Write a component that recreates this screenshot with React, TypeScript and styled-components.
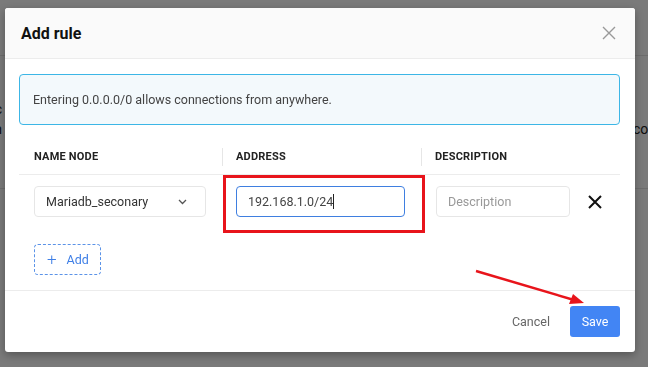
import styled, { createGlobalStyle } from "styled-components";

// page setup
const GlobalStyle = createGlobalStyle`
  html, body {
    margin: 0;
    padding: 0;
    width: 648px;
    height: 367px;
    overflow: hidden;
    font-family: Roboto, "Liberation Sans", Arial, sans-serif;
  }
  * { box-sizing: border-box; }
`;

const columns = ["Name node", "Address", "Description"];

export default function App() {
	return (
		<>
			<GlobalStyle />
			<Page>
				<PageTop />
				<PageRows>
					<PageCol>
						<PageText>sec</PageText>
						<PageText>on</PageText>
					</PageCol>
					<PageCol $right>
						<PageText>con</PageText>
					</PageCol>
				</PageRows>
				<PageLine />
			</Page>
			<Backdrop />

			<Modal>
				<Header>
					<Title>Add rule</Title>
					<CloseBtn aria-label="close">
						<svg width="14" height="14" viewBox="0 0 14 14">
							<path d="M1 1L13 13M13 1L1 13" stroke="#999" strokeWidth="1.4" />
						</svg>
					</CloseBtn>
				</Header>

				<Body>
					<Alert>Entering 0.0.0.0/0 allows connections from anywhere.</Alert>

					<Table>
						<HeadRow>
							{columns.map((col, i) => (
								<HeadCell key={col} $divider={i > 0}>
									{col}
								</HeadCell>
							))}
						</HeadRow>
						<Row>
							<Cell $pad={15}>
								<Select>
									<span>Mariadb_seconary</span>
									<svg width="9" height="6" viewBox="0 0 9 6">
										<path d="M1 1l3.5 3.5L8 1" fill="none" stroke="#555" strokeWidth="1.3" />
									</svg>
								</Select>
							</Cell>
							<Cell $pad={14}>
								<Input $focused>
									192.168.1.0/24<Caret />
								</Input>
							</Cell>
							<Cell $pad={15}>
								<Input $width="134px" $placeholder>
									Description
								</Input>
								<RemoveBtn aria-label="remove">
									<svg width="14" height="14" viewBox="0 0 14 14">
										<path d="M1 1L13 13M13 1L1 13" stroke="#111" strokeWidth="2" />
									</svg>
								</RemoveBtn>
							</Cell>
						</Row>
					</Table>

					<AddBtn>
						<span>+</span>
						Add
					</AddBtn>
				</Body>

				<Footer>
					<CancelBtn>Cancel</CancelBtn>
					<SaveBtn>Save</SaveBtn>
				</Footer>

				{/* screenshot annotations */}
				<Highlight />
				<Arrow width="120" height="40" viewBox="0 0 120 40">
					<path d="M2 2L100 31" stroke="#e8141b" strokeWidth="2.4" />
					<path d="M110 34L95 35L99 25Z" fill="#e8141b" />
				</Arrow>
			</Modal>
		</>
	);
}

const Page = styled.div`
  width: 648px;
  height: 367px;
  background: #fff;
  display: flex;
  flex-direction: column;
`;

const PageTop = styled.div`
  height: 56px;
  border-bottom: 1px solid #e4e4e4;
`;

const PageRows = styled.div`
  display: flex;
  justify-content: space-between;
  padding: 44px 0 0;
  height: 132px;
`;

const PageCol = styled.div<{ $right?: boolean }>`
  display: flex;
  flex-direction: column;
  gap: 2px;
  align-items: flex-end;
  margin-left: ${(p) => (p.$right ? "0" : "-20px")};
  margin-right: ${(p) => (p.$right ? "-8px" : "0")};
  padding-top: ${(p) => (p.$right ? "20px" : "0")};
`;

const PageText = styled.div`
  font-size: 14px;
  line-height: 18px;
  color: #222;
`;

const PageLine = styled.div`
  border-top: 1px solid #e4e4e4;
`;

const Backdrop = styled.div`
  position: fixed;
  inset: 0;
  background: rgba(0, 0, 0, 0.52);
`;

const Modal = styled.div`
  position: absolute;
  left: 5px;
  top: 8px;
  width: 630px;
  background: #fff;
  border-radius: 3px;
  box-shadow: 0 3px 8px rgba(0, 0, 0, 0.3);
`;

const Header = styled.div`
  height: 51px;
  background: #fafafa;
  border-bottom: 1px solid #ececec;
  border-radius: 3px 3px 0 0;
  display: flex;
  align-items: center;
  justify-content: space-between;
  padding: 0 19px 0 16px;
`;

const Title = styled.h2`
  margin: 0;
  font-size: 16px;
  font-weight: 700;
  color: #111;
`;

const CloseBtn = styled.button`
  border: 0;
  background: none;
  padding: 0;
  display: flex;
`;

const Body = styled.div`
  padding: 15px 15px 15px 14px;
`;

const Alert = styled.div`
  height: 51px;
  background: #f3f9fc;
  border: 1px solid #3cb6e6;
  border-radius: 4px;
  display: flex;
  align-items: center;
  padding: 0 13px;
  font-size: 12.5px;
  color: #444;
`;

const Table = styled.div`
  margin-top: 15px;
`;

const HeadRow = styled.div`
  display: grid;
  grid-template-columns: 203px 199px 1fr;
  height: 35px;
  align-items: center;
  border-bottom: 1px solid #ececec;
`;

const HeadCell = styled.div<{ $divider?: boolean }>`
  font-size: 11px;
  font-weight: 700;
  letter-spacing: 0.2px;
  text-transform: uppercase;
  color: #222;
  padding-left: ${(p) => (p.$divider ? "13px" : "15px")};
  border-left: ${(p) => (p.$divider ? "1px solid #e6e6e6" : "none")};
  line-height: 18px;
`;

const Row = styled.div`
  display: grid;
  grid-template-columns: 203px 199px 1fr;
  padding: 11px 0 27px;
`;

const Cell = styled.div<{ $pad: number }>`
  display: flex;
  align-items: center;
  padding-left: ${(p) => p.$pad}px;
`;

const Select = styled.div`
  width: 172px;
  height: 31px;
  border: 1px solid #e6e6e6;
  border-radius: 4px;
  display: flex;
  align-items: center;
  justify-content: space-between;
  padding: 0 18px 0 11px;
  font-size: 12.5px;
  color: #333;
`;

const Input = styled.div<{ $focused?: boolean; $placeholder?: boolean; $width?: string }>`
  width: ${(p) => p.$width || "169px"};
  height: 31px;
  border: 1px solid ${(p) => (p.$focused ? "#3f7fe0" : "#e6e6e6")};
  border-radius: 4px;
  display: flex;
  align-items: center;
  padding: 0 11px;
  font-size: 12.5px;
  color: ${(p) => (p.$placeholder ? "#999" : "#444")};
`;

const Caret = styled.span`
  display: inline-block;
  width: 1px;
  height: 15px;
  background: #222;
`;

const RemoveBtn = styled.button`
  border: 0;
  background: none;
  padding: 0;
  margin-left: 18px;
  display: flex;
`;

const AddBtn = styled.button`
  width: 67px;
  height: 31px;
  border: 1px dashed #5b93e8;
  border-radius: 4px;
  background: #fff;
  color: #3f7fe6;
  font-family: inherit;
  font-size: 12.5px;
  display: flex;
  align-items: center;
  gap: 10px;
  padding: 0 0 0 12px;
  margin-left: 15px;

  & span {
    font-size: 17px;
    font-weight: 300;
    line-height: 1;
  }
`;

const Footer = styled.div`
  border-top: 1px solid #ececec;
  height: 62px;
  display: flex;
  align-items: center;
  justify-content: flex-end;
  gap: 20px;
  padding-right: 15px;
`;

const CancelBtn = styled.button`
  border: 0;
  background: none;
  font-family: inherit;
  font-size: 12.5px;
  color: #666;
  padding: 0;
`;

const SaveBtn = styled.button`
  width: 50px;
  height: 31px;
  border: 0;
  border-radius: 3px;
  background: #4285f4;
  color: #fff;
  font-family: inherit;
  font-size: 12.5px;
`;

const Highlight = styled.div`
  position: absolute;
  left: 218px;
  top: 167px;
  width: 202px;
  height: 58px;
  border: 3px solid #e8141b;
`;

const Arrow = styled.svg`
  position: absolute;
  left: 469px;
  top: 261px;
`;
